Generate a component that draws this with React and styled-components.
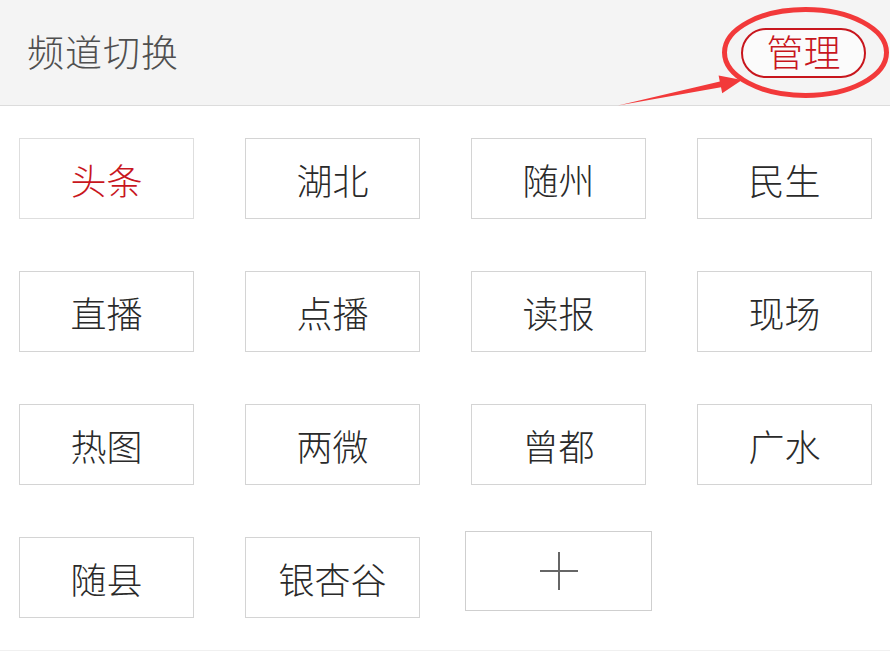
import React from "react";
import styled, { createGlobalStyle } from "styled-components";

const channels = [
  { name: "头条", active: true },
  { name: "湖北" },
  { name: "随州" },
  { name: "民生" },
  { name: "直播" },
  { name: "点播" },
  { name: "读报" },
  { name: "现场" },
  { name: "热图" },
  { name: "两微" },
  { name: "曾都" },
  { name: "广水" },
  { name: "随县" },
  { name: "银杏谷" },
];

const App = () => {
  return (
    <Page>
      <GlobalStyle />
      <Header>
        <Title>频道切换</Title>
        <ManageButton>管理</ManageButton>
      </Header>

      <Grid>
        {channels.map((c) => (
          <Tile key={c.name} $active={c.active}>
            {c.name}
          </Tile>
        ))}
        <AddTile aria-label="添加">
          <svg width="38" height="38" viewBox="0 0 38 38">
            <path d="M19 0V38M0 19H38" stroke="#666" strokeWidth="2" />
          </svg>
        </AddTile>
      </Grid>

      {/* red callout drawn over the header */}
      <Callout width="890" height="120" viewBox="0 0 890 120">
        <ellipse cx="805.5" cy="52.5" rx="81" ry="43" fill="none" stroke="#f2393a" strokeWidth="5" />
        <polygon
          points="618,105.5 719.8,81.5 718.6,75.6 742,80 722.2,93.2 721,87.3"
          fill="#f2393a"
        />
      </Callout>
    </Page>
  );
};

export default App;

const GlobalStyle = createGlobalStyle`
  body {
    margin: 0;
    background: #fff;
    font-family: "Noto Sans CJK SC", "Noto Sans", sans-serif;
  }
`;

const Page = styled.div`
  position: relative;
  width: 890px;
  height: 652px;
  overflow: hidden;
  background: #fff;
`;

const Header = styled.div`
  height: 106px;
  box-sizing: border-box;
  background: #f4f4f4;
  border-bottom: 1px solid #dcdcdc;
  display: flex;
  align-items: center;
  justify-content: space-between;
  padding: 0 24px 0 27px;
`;

const Title = styled.h1`
  margin: 0 0 4px;
  font-size: 37px;
  font-weight: 300;
  color: #4f4f4f;
  letter-spacing: 1px;
`;

const ManageButton = styled.button`
  width: 125px;
  height: 50px;
  box-sizing: border-box;
  border: 2px solid #c8161d;
  border-radius: 25px;
  background: #fbfbfb;
  color: #c8161d;
  font-family: inherit;
  font-size: 37px;
  font-weight: 300;
  line-height: 1;
  padding: 0 0 2px;
  cursor: pointer;
`;

const Grid = styled.div`
  display: grid;
  grid-template-columns: repeat(4, 175px);
  grid-auto-rows: 81px;
  justify-content: space-between;
  row-gap: 52px;
  padding: 32px 18px 32px 19px;
  border-bottom: 1px solid #f0f0f0;
`;

const Tile = styled.div`
  box-sizing: border-box;
  display: flex;
  align-items: center;
  justify-content: center;
  border: 1.5px solid ${(p) => (p.$active ? "#dedede" : "#d4d4d4")};
  color: ${(p) => (p.$active ? "#c8161d" : "#2a2a2a")};
  font-size: 36px;
  font-weight: 300;
  background: #fff;
`;

const AddTile = styled.button`
  box-sizing: border-box;
  width: 187px;
  height: 80px;
  justify-self: center;
  margin-top: -6px;
  display: flex;
  align-items: center;
  justify-content: center;
  border: 1.5px solid #cfcfcf;
  background: #fff;
  padding: 0;
  cursor: pointer;
`;

const Callout = styled.svg`
  position: absolute;
  left: 0;
  top: 0;
  pointer-events: none;
`;
